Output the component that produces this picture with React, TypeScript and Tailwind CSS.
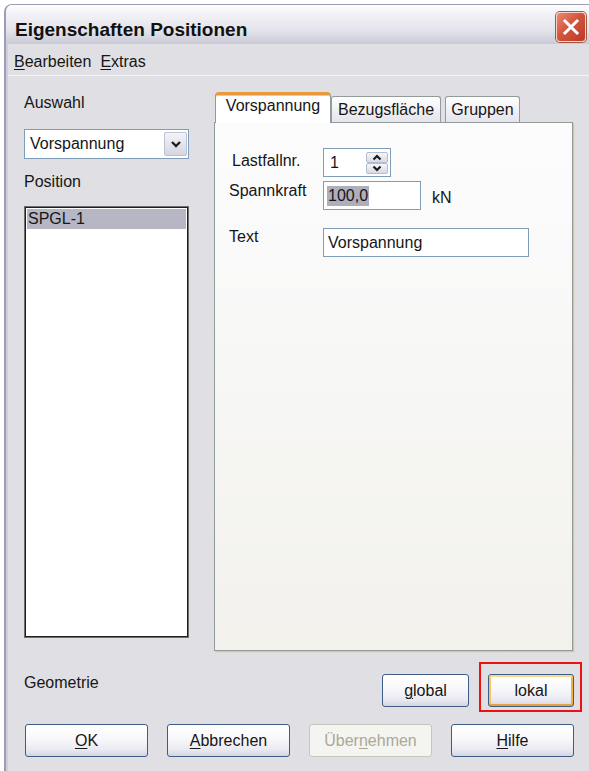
import React from 'react';

// XP silver push button
const xpButton =
  'h-[33px] rounded-[3px] border border-[#3d5c88] bg-[linear-gradient(to_bottom,#ffffff_0%,#f8f8fb_45%,#e9e9f1_80%,#d5d5e2_100%)] flex items-center justify-center text-[16px] text-[#151515]';

const Mnemonic = ({ text, at }: { text: string; at: number }) => (
  <span>
    {text.slice(0, at)}
    <span className="underline decoration-1 underline-offset-[2px]">{text[at]}</span>
    {text.slice(at + 1)}
  </span>
);

const ArrowGlyph = ({ up }: { up?: boolean }) => (
  <svg width="10" height="7" viewBox="0 0 10 7">
    <path
      d={up ? 'M1.5 5.5 L5 2 L8.5 5.5' : 'M1.5 1.5 L5 5 L8.5 1.5'}
      fill="none"
      stroke="#1c1c1c"
      strokeWidth="2.2"
    />
  </svg>
);

const SpinButton = ({ up }: { up?: boolean }) => (
  <div className="h-[11px] w-[22px] rounded-[2px] border border-[#b3bdd2] bg-[linear-gradient(to_bottom,#f6f6fa,#d9d9e5)] flex items-center justify-center">
    <ArrowGlyph up={up} />
  </div>
);

const TabPage = () => (
  <div className="flex flex-col">
    {/* Lastfallnr. */}
    <div className="mt-[25px] flex h-[29px]">
      <div className="w-[108px] pl-[17px] mt-[4px]">Lastfallnr.</div>
      <div className="w-[68px] h-[29px] border border-[#7f9db9] bg-white flex">
        <div className="flex-1 pl-[6px] flex items-center">1</div>
        <div className="flex flex-col justify-center mr-[2px]">
          <SpinButton up />
          <SpinButton />
        </div>
      </div>
    </div>

    {/* Spannkraft */}
    <div className="mt-[4px] flex h-[29px]">
      <div className="w-[108px] pl-[14px] mt-[1px]">Spannkraft</div>
      <div className="w-[98px] h-[29px] border border-[#7f9db9] bg-white flex items-center pl-[3px]">
        <span className="bg-[#aeafbb] px-[1px] leading-[20px]">100,0</span>
      </div>
      <div className="ml-[11px] mt-[8px]">kN</div>
    </div>

    {/* Text */}
    <div className="mt-[18px] flex h-[29px]">
      <div className="w-[108px] pl-[14px]">Text</div>
      <div className="w-[206px] h-[29px] border border-[#7f9db9] bg-white flex items-center pl-[4px]">
        Vorspannung
      </div>
    </div>
  </div>
);

export default function App() {
  return (
    <div className="w-[589px] h-[771px] overflow-hidden bg-white font-['Liberation_Sans',Arial,sans-serif] text-[16px] leading-[18px] text-[#161616]">
      <div className="ml-[4px] mt-[4px] w-[585px] h-[767px] flex flex-col rounded-tl-[8px] overflow-hidden border-l-2 border-t border-[#9d9cb5]">
        {/* title bar */}
        <div className="h-[39px] flex items-start bg-[linear-gradient(to_bottom,#ffffff_0%,#f2f2f6_22%,#e3e3eb_65%,#cacad7_100%)]">
          <div className="flex-1 pl-[9px] pt-[14px] text-[19px] leading-[22px] font-bold text-[#111]">
            Eigenschaften Positionen
          </div>
          <div className="mt-[7px] mr-[3px] w-[30px] h-[30px] rounded-[4px] border border-[#f3d5cc] bg-[linear-gradient(135deg,#eb8a70_0%,#d4553d_45%,#b93a28_100%)] flex items-center justify-center shadow-[0_0_0_1px_#a8573f]">
            <svg width="18" height="18" viewBox="0 0 18 18">
              <path d="M3 3 L15 15 M15 3 L3 15" stroke="#ffffff" strokeWidth="3" strokeLinecap="square" />
            </svg>
          </div>
        </div>

        <div className="flex-1 flex flex-col border-l-2 border-[#cfcedc] bg-[#e0dfe3]">
          {/* menu */}
          <div className="h-[32px] flex items-start pt-[9px] pl-[6px] gap-[9px] border-b border-[#f5f5f8]">
            <Mnemonic text="Bearbeiten" at={0} />
            <Mnemonic text="Extras" at={0} />
          </div>

          <div className="flex h-[575px]">
            {/* left column */}
            <div className="ml-[16px] w-[165px] flex flex-col">
              <div className="mt-[18px]">Auswahl</div>
              <div className="mt-[17px] h-[30px] border border-[#7f9db9] bg-white flex items-center">
                <div className="flex-1 pl-[5px]">Vorspannung</div>
                <div className="mr-[1px] w-[23px] h-[24px] rounded-[2px] border border-[#b9c3d8] bg-[linear-gradient(to_bottom,#f3f3f8,#d6d6e3)] flex items-center justify-center">
                  <svg width="12" height="9" viewBox="0 0 12 9">
                    <path d="M2 2 L6 6 L10 2" fill="none" stroke="#202020" strokeWidth="2.4" />
                  </svg>
                </div>
              </div>
              <div className="mt-[14px]">Position</div>
              <div className="mt-[15px] h-[432px] border border-[#6e6e6e] shadow-[inset_0_0_0_1px_#1e1e1e] bg-white p-[2px]">
                <div className="h-[20px] bg-[#b6b6c4] pl-[1px] flex items-center">SPGL-1</div>
              </div>
            </div>

            {/* tab control */}
            <div className="ml-[25px] w-[361px] flex flex-col">
              <div className="mt-[16px] h-[31px] flex items-end pl-[1px]">
                <div className="relative z-10 w-[116px] h-[31px] rounded-t-[4px] border-x border-[#919b9c] border-t-[3px] border-t-[#e89a3c] bg-white shadow-[inset_0_1px_0_#ffc860] pt-[2px] text-center">
                  Vorspannung
                </div>
                <div className="mb-[1px] w-[110px] h-[26px] rounded-t-[3px] border border-b-0 border-[#919b9c] bg-[linear-gradient(to_bottom,#ffffff,#e4e4ea)] pt-[4px] text-center">
                  Bezugsfläche
                </div>
                <div className="mb-[1px] ml-[4px] w-[75px] h-[26px] rounded-t-[3px] border border-b-0 border-[#919b9c] bg-[linear-gradient(to_bottom,#ffffff,#e4e4ea)] pt-[4px] text-center">
                  Gruppen
                </div>
              </div>
              <div className="-mt-[1px] w-[359px] h-[529px] border border-[#919b9c] bg-[linear-gradient(to_bottom,#fcfcfd_0%,#f8f8f7_40%,#f2f1ec_100%)] shadow-[1px_1px_0_#c9c8b8,2px_2px_0_#dedcd0]">
                <TabPage />
              </div>
            </div>
          </div>

          {/* Geometrie */}
          <div className="mt-[11px] h-[50px] flex">
            <div className="ml-[16px] w-[358px] pt-[12px]">Geometrie</div>
            <div className={`${xpButton} mt-[12px] w-[87px]`}>
              <Mnemonic text="global" at={0} />
            </div>
            <div className="ml-[10px] w-[103px] h-[50px] border-2 border-[#ee1111] pt-[10px] pl-[7px]">
              <div
                className={`${xpButton} w-[86px] shadow-[inset_0_2px_0_#fbd98a,inset_0_-2px_0_#e6a23c,inset_2px_0_0_#f7c564,inset_-2px_0_0_#f0b24c]`}
              >
                lokal
              </div>
            </div>
          </div>

          {/* dialog buttons */}
          <div className="mt-[12px] flex gap-[19px] pl-[17px]">
            <div className={`${xpButton} w-[123px]`}>
              <Mnemonic text="OK" at={0} />
            </div>
            <div className={`${xpButton} w-[123px]`}>
              <Mnemonic text="Abbrechen" at={0} />
            </div>
            <div className="h-[33px] w-[123px] rounded-[3px] border border-[#c9c7ba] bg-[#f4f4f0] flex items-center justify-center text-[#aca899]">
              <Mnemonic text="Übernehmen" at={4} />
            </div>
            <div className={`${xpButton} w-[123px]`}>
              <Mnemonic text="Hilfe" at={0} />
            </div>
          </div>
        </div>
      </div>
    </div>
  );
}
